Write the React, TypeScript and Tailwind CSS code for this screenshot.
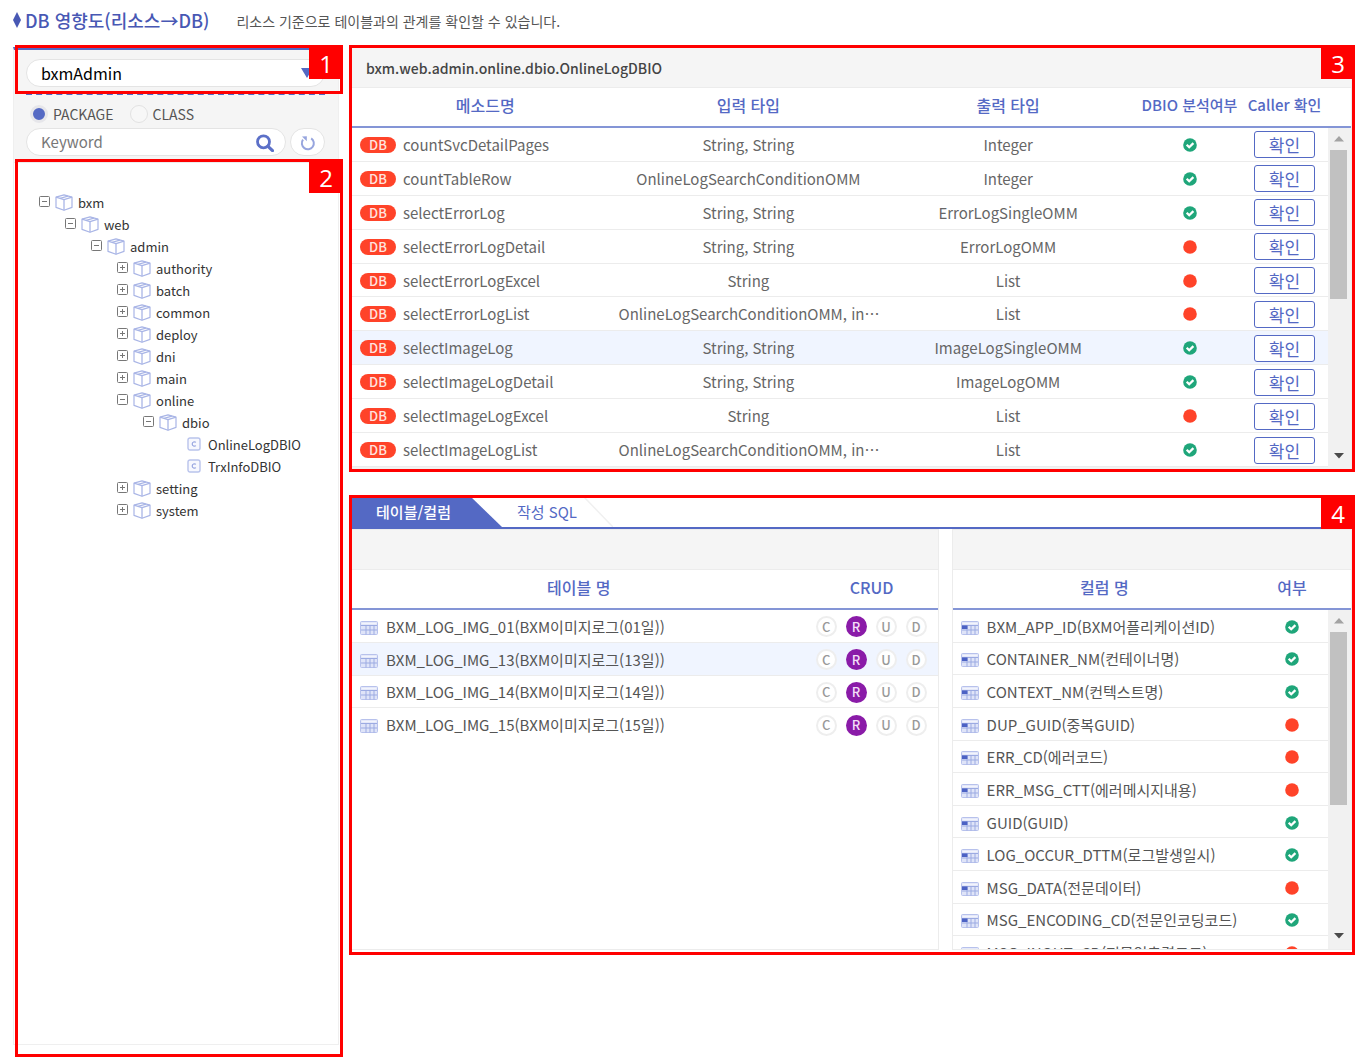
import React from "react";

type Status = "ok" | "off";

function Marker({ n, className }: { n: number; className: string }) {
  return (
    <div className={`pointer-events-none absolute z-20 border-[3px] border-[#ff0000] ${className}`}>
      <span className="absolute -right-[3px] -top-[3px] flex size-[34px] items-center justify-center bg-[#ff0000] pt-1 font-['Open_Sans',sans-serif] text-2xl text-white">
        {n}
      </span>
    </div>
  );
}

function StatusIcon({ status }: { status: Status }) {
  return status === "ok" ? (
    <svg viewBox="0 0 14 14" className="mx-auto size-[14px]" role="img" aria-label="분석됨">
      <circle cx="7" cy="7" r="6.8" fill="#1fa67a" />
      <path d="M3.7 6.7l2.500 2.500 4.200-4.100" fill="none" stroke="#fff" strokeWidth="2.300" />
    </svg>
  ) : (
    <svg viewBox="0 0 14 14" className="mx-auto size-[14px]" role="img" aria-label="미분석">
      <circle cx="7" cy="7" r="6.8" fill="#ff4329" />
    </svg>
  );
}

function PackageIcon() {
  return (
    <svg viewBox="0 0 18 17" className="h-[17px] w-[18px] shrink-0" fill="none" stroke="#a9b5e6" strokeLinejoin="round">
      <path d="M9 .9L1 3.2v10.2l8 2.9 8-2.9V3.2z" fill="#fff" strokeWidth="1.200" />
      <path d="M1 3.2l8 2.500 8-2.500" strokeWidth="1.300" />
      <path d="M9 5.700v10.500" strokeWidth="1.300" />
      <path d="M5 4.400l8-2.300" strokeWidth="1.100" />
    </svg>
  );
}

function ClassIcon() {
  return (
    <svg viewBox="0 0 14 14" className="mx-[2px] size-[14px] shrink-0" fill="none">
      <rect x="1" y="1" width="12" height="12" rx="2" fill="#f7f8fe" stroke="#b9c3ec" strokeWidth="1.4" />
      <path d="M8.9 5.4C7.6 4.2 5.2 4.900 5.200 7s2.400 2.800 3.700 1.600" stroke="#97a5e0" strokeWidth="1.200" />
    </svg>
  );
}

function TableIcon({ column }: { column?: boolean }) {
  return (
    <svg viewBox="0 0 18 14" className="mt-[2px] h-[14px] w-[18px] shrink-0">
      <rect x=".5" y=".5" width="17" height="13" rx="1" fill="#dfe4f8" stroke="#b7c1ec" />
      <path d="M1 4.500h16M1 9h16M6 4.500v9M10 4.500v9M14 4.500v9" stroke="#9cabe2" fill="none" />
      <path d="M1.500 2.500h15" stroke="#f2f4fd" strokeWidth="1.500" />
      {column && <rect x="1" y="4.500" width="5.500" height="3.500" fill="#4c62c4" />}
    </svg>
  );
}

function Scrollbar({ className, thumb }: { className: string; thumb: string }) {
  return (
    <div className={`absolute right-0 flex w-[23px] flex-col items-center bg-[#f1f1f1] pr-[2px] ${className}`} aria-hidden="true">
      <svg viewBox="0 0 10 6" className="my-2 h-[6px] w-[10px] shrink-0">
        <path d="M5 0l5 5.500H0z" fill="#a3a3a3" />
      </svg>
      <div className={`w-[17px] bg-[#c1c1c1] ${thumb}`} />
      <svg viewBox="0 0 10 6" className="mb-[10px] mt-auto h-[6px] w-[10px] shrink-0">
        <path d="M0 0h10L5 5.500z" fill="#4a4a4a" />
      </svg>
    </div>
  );
}

const tree: { level: number; name: string; kind: "open" | "closed" | "leaf" }[] = [
  { level: 1, name: "bxm", kind: "open" },
  { level: 2, name: "web", kind: "open" },
  { level: 3, name: "admin", kind: "open" },
  { level: 4, name: "authority", kind: "closed" },
  { level: 4, name: "batch", kind: "closed" },
  { level: 4, name: "common", kind: "closed" },
  { level: 4, name: "deploy", kind: "closed" },
  { level: 4, name: "dni", kind: "closed" },
  { level: 4, name: "main", kind: "closed" },
  { level: 4, name: "online", kind: "open" },
  { level: 5, name: "dbio", kind: "open" },
  { level: 6, name: "OnlineLogDBIO", kind: "leaf" },
  { level: 6, name: "TrxInfoDBIO", kind: "leaf" },
  { level: 4, name: "setting", kind: "closed" },
  { level: 4, name: "system", kind: "closed" },
];

const methods: [string, string, string, Status][] = [
  ["countSvcDetailPages", "String, String", "Integer", "ok"],
  ["countTableRow", "OnlineLogSearchConditionOMM", "Integer", "ok"],
  ["selectErrorLog", "String, String", "ErrorLogSingleOMM", "ok"],
  ["selectErrorLogDetail", "String, String", "ErrorLogOMM", "off"],
  ["selectErrorLogExcel", "String", "List", "off"],
  ["selectErrorLogList", "OnlineLogSearchConditionOMM, in…", "List", "off"],
  ["selectImageLog", "String, String", "ImageLogSingleOMM", "ok"],
  ["selectImageLogDetail", "String, String", "ImageLogOMM", "ok"],
  ["selectImageLogExcel", "String", "List", "off"],
  ["selectImageLogList", "OnlineLogSearchConditionOMM, in…", "List", "ok"],
];

const tables = ["01", "13", "14", "15"];

const columns: [string, Status][] = [
  ["BXM_APP_ID(BXM어플리케이션ID)", "ok"],
  ["CONTAINER_NM(컨테이너명)", "ok"],
  ["CONTEXT_NM(컨텍스트명)", "ok"],
  ["DUP_GUID(중복GUID)", "off"],
  ["ERR_CD(에러코드)", "off"],
  ["ERR_MSG_CTT(에러메시지내용)", "off"],
  ["GUID(GUID)", "ok"],
  ["LOG_OCCUR_DTTM(로그발생일시)", "ok"],
  ["MSG_DATA(전문데이터)", "off"],
  ["MSG_ENCODING_CD(전문인코딩코드)", "ok"],
  ["MSG_INOUT_CD(전문입출력코드)", "off"],
];

const radio =
  "size-[18px] appearance-none rounded-full border border-[#e2e2e2] bg-[#f7f7f7] checked:border-[3px] checked:border-[#e6e6ea] checked:bg-[#5469c4]";

function Sidebar() {
  return (
    <aside className="relative flex h-[998px] w-[326px] shrink-0 flex-col border border-t-[3px] border-[#efefef] border-t-[#5469c4] bg-white">
      <form className="border-b border-[#ececec] bg-[#f5f5f5] pb-[6px] pl-3 pr-[13px] pt-[9px]">
        <div className="relative">
          <select
            aria-label="애플리케이션"
            className="h-[28px] w-full appearance-none rounded-full border border-[#e4e4e4] bg-white px-[14px] text-base leading-6 text-black"
          >
            <option>bxmAdmin</option>
          </select>
          <svg viewBox="0 0 12 10" className="pointer-events-none absolute right-3 top-[9px] h-[10px] w-3">
            <path d="M0 0h12L6 10z" fill="#5469c4" />
          </svg>
        </div>
        <div className="mt-[6px] flex h-[34px] items-center border-t-2 border-dashed border-[#5469c4] pl-1 pt-[6px] text-[14px] text-[#555]">
          <label className="flex items-center gap-[5px]">
            <input type="radio" name="kind" defaultChecked className={radio} />
            PACKAGE
          </label>
          <label className="ml-4 flex items-center gap-[5px]">
            <input type="radio" name="kind" className={radio} />
            CLASS
          </label>
        </div>
        <div className="mt-px flex gap-1">
          <div className="relative flex-1">
            <input
              type="text"
              aria-label="Keyword"
              placeholder="Keyword"
              className="h-[28px] w-full rounded-full border border-[#e4e4e4] bg-white px-[14px] pb-[2px] text-[15px] placeholder:text-[#777]"
            />
            <button type="button" aria-label="검색" className="absolute right-3 top-[6px]">
              <svg viewBox="0 0 18 18" className="size-[18px]" fill="none" stroke="#5c70c8">
                <circle cx="7.500" cy="7.800" r="6" strokeWidth="2.800" />
                <path d="M12 12.400l4.500 4.200" strokeWidth="3.200" strokeLinecap="round" />
              </svg>
            </button>
          </div>
          <button
            type="button"
            aria-label="초기화"
            className="flex h-[28px] w-[35px] items-center justify-center rounded-full border border-[#e4e4e4] bg-white"
          >
            <svg viewBox="0 0 16 18" className="h-[18px] w-4" fill="none">
              <path d="M11.200 5.300A6 6 0 1 1 3 6.700" stroke="#97a5de" strokeWidth="2" />
              <path d="M2 3.500l4.800-.2v4.900z" fill="#97a5de" />
            </svg>
          </button>
        </div>
      </form>

      <ul role="tree" className="pl-[25px] pt-7 text-[13px] text-[#333]">
        {tree.map((node) => (
          <li
            key={node.name}
            role="treeitem"
            aria-level={node.level}
            className="flex h-[22px] items-center"
            style={{ paddingLeft: (node.level - 1) * 26 }}
          >
            {node.kind === "leaf" ? (
              <span className="w-4" />
            ) : (
              <button type="button" aria-label={node.kind === "open" ? "접기" : "펼치기"} className="mb-[2px] mr-[5px]">
                <svg viewBox="0 0 11 11" className="size-[11px]" fill="none">
                  <rect x=".5" y=".5" width="10" height="10" rx="1" fill="#fff" stroke="#777" />
                  <path d="M3 5.500h5" stroke="#777" />
                  {node.kind === "closed" && <path d="M5.500 3v5" stroke="#777" />}
                </svg>
              </button>
            )}
            {node.kind === "leaf" ? <ClassIcon /> : <PackageIcon />}
            <span className="ml-[5px] pt-[2px]">{node.name}</span>
          </li>
        ))}
      </ul>

      <Marker n={1} className="-right-[5px] -top-[5px] left-px h-[49px]" />
      <Marker n={2} className="-bottom-[13px] -right-[5px] left-px top-[109px]" />
    </aside>
  );
}

const th = "h-10 border-b-2 border-[#8495d6] p-0 pb-1 text-center font-medium whitespace-nowrap";

function MethodPanel() {
  return (
    <section className="relative h-[423px] border border-[#ececec] bg-[#f1f1f1]">
      <h2 className="flex h-[40px] items-center border-b border-[#ececec] bg-[#f5f5f5] px-[14px] text-[14px] font-medium text-[#444]">
        bxm.web.admin.online.dbio.OnlineLogDBIO
      </h2>
      <table className="h-[379px] w-full table-fixed border-separate border-spacing-0 bg-white text-[15px] text-[#666]">
        <colgroup>
          <col />
          <col className="w-[26%]" />
          <col className="w-[26%]" />
          <col className="w-[103px]" />
          <col className="w-[87px]" />
          <col className="w-[23px]" />
        </colgroup>
        <thead className="text-base text-[#5469c4]">
          <tr>
            <th className={th}>메소드명</th>
            <th className={th}>입력 타입</th>
            <th className={th}>출력 타입</th>
            <th className={`${th} text-[15px]`}>DBIO 분석여부</th>
            <th className={`${th} text-[15px]`}>Caller 확인</th>
            <td className={th} />
          </tr>
        </thead>
        <tbody>
          {methods.map(([name, input, output, status]) => (
            <tr
              key={name}
              className={`*:border-b *:border-[#ececec] *:p-0 *:pt-px *:text-center ${name === "selectImageLog" ? "bg-[#f0f5ff]" : ""}`}
            >
              <td>
                <div className="flex items-center gap-[7px] pl-2">
                  <span className="flex h-4 w-9 items-center justify-center rounded-full bg-[#ff4329] text-[13px] font-medium text-[#ffe3de]">
                    DB
                  </span>
                  {name}
                </div>
              </td>
              <td className="whitespace-nowrap">{input}</td>
              <td>{output}</td>
              <td>
                <StatusIcon status={status} />
              </td>
              <td>
                <button
                  type="button"
                  className="mx-auto flex h-[27px] w-[61px] items-center justify-center rounded-[3px] border border-[#5469c4] bg-white text-[17px] leading-none text-[#5469c4]"
                >
                  확인
                </button>
              </td>
              <td />
            </tr>
          ))}
        </tbody>
      </table>
      <Scrollbar className="bottom-0 top-[80px]" thumb="h-[149px]" />
      <Marker n={3} className="-bottom-[3px] -left-[3px] -right-[4px] -top-[3px]" />
    </section>
  );
}

function Crud() {
  return (
    <div className="flex justify-end gap-[9px] pr-[11px] text-[13px] font-medium">
      {["C", "R", "U", "D"].map((letter) => (
        <span
          key={letter}
          className={
            letter === "R"
              ? "flex size-[21px] items-center justify-center rounded-full bg-[#8a1ba8] text-[#f3dff7]"
              : "flex size-[21px] items-center justify-center rounded-full border-2 border-[#eeeeee] bg-white text-[#999]"
          }
        >
          {letter}
        </span>
      ))}
    </div>
  );
}

function DetailPanel() {
  return (
    <section className="relative mt-[27px]">
      <div role="tablist" className="flex h-[32px] border-b-2 border-[#5469c4] text-[15px]">
        <button
          type="button"
          role="tab"
          aria-selected="true"
          className="w-[151px] bg-[#5469c4] pr-[26px] font-medium text-white [clip-path:polygon(0_0,120px_0,100%_100%,0_100%)]"
        >
          테이블/컬럼
        </button>
        <button type="button" role="tab" aria-selected="false" className="flex items-center pl-[15px] text-[#5469c4]">
          작성 SQL
          <svg viewBox="0 0 30 30" className="ml-[6px] size-[30px]">
            <path d="M1 0l29 30" stroke="#f0f0f0" strokeWidth="1.500" />
          </svg>
        </button>
      </div>
      <div className="flex h-[421px] gap-[13px]">
        <div className="flex-1 border border-[#ececec]">
          <div className="h-10 border-b border-[#ececec] bg-[#f5f5f5]" />
          <table className="h-[171px] w-full table-fixed border-separate border-spacing-0 text-[15px] text-[#555]">
            <colgroup>
              <col />
              <col className="w-[132px]" />
            </colgroup>
            <thead className="text-base text-[#5469c4]">
              <tr>
                <th className={th}>테이블 명</th>
                <th className={th}>CRUD</th>
              </tr>
            </thead>
            <tbody>
              {tables.map((id) => (
                <tr
                  key={id}
                  className={`*:border-b *:border-[#ececec] *:p-0 *:pt-[2px] last:*:border-transparent ${id === "13" ? "bg-[#f0f5ff]" : ""}`}
                >
                  <td>
                    <div className="flex items-center gap-2 whitespace-nowrap pl-[8px]">
                      <TableIcon />
                      BXM_LOG_IMG_{id}(BXM이미지로그({id}일))
                    </div>
                  </td>
                  <td>
                    <Crud />
                  </td>
                </tr>
              ))}
            </tbody>
          </table>
        </div>
        <div className="relative w-[40%] overflow-hidden border border-[#ececec]">
          <div className="h-10 border-b border-[#ececec] bg-[#f5f5f5]" />
          <table className="h-[399px] w-full table-fixed border-separate border-spacing-0 text-[15px] text-[#555]">
            <colgroup>
              <col />
              <col className="w-[72px]" />
              <col className="w-[23px]" />
            </colgroup>
            <thead className="text-base text-[#5469c4]">
              <tr>
                <th className={th}>컬럼 명</th>
                <th className={th}>여부</th>
                <td className={th} />
              </tr>
            </thead>
            <tbody>
              {columns.map(([name, status]) => (
                <tr key={name} className="*:border-b *:border-[#ececec] *:p-0 *:pt-[2px]">
                  <td>
                    <div className="flex items-center gap-2 whitespace-nowrap pl-2">
                      <TableIcon column />
                      {name}
                    </div>
                  </td>
                  <td>
                    <StatusIcon status={status} />
                  </td>
                  <td />
                </tr>
              ))}
            </tbody>
          </table>
          <Scrollbar className="bottom-0 top-[80px]" thumb="h-[173px]" />
        </div>
      </div>
      <Marker n={4} className="-bottom-[5px] -left-[2px] -right-[3px] -top-[2px]" />
    </section>
  );
}

export default function App() {
  return (
    <div
      lang="ko"
      className="min-h-screen bg-white pl-[13px] pr-[14px] font-['Noto_Sans_CJK_KR',sans-serif] leading-5"
    >
      <header className="flex h-[47px] items-start gap-[27px] pt-[10px]">
        <h1 className="flex items-center gap-[4px] text-lg leading-5 font-medium text-[#4858b4]">
          <svg viewBox="0 0 8 16" className="h-4 w-2">
            <path d="M4 0l4 8-4 8-4-8z" fill="#4858b4" />
          </svg>
          DB 영향도(리소스→DB)
        </h1>
        <p className="pt-px text-[14px] text-[#555]">리소스 기준으로 테이블과의 관계를 확인할 수 있습니다.</p>
      </header>
      <main className="flex items-start gap-3">
        <Sidebar />
        <div className="min-w-0 flex-1">
          <MethodPanel />
          <DetailPanel />
        </div>
      </main>
    </div>
  );
}
